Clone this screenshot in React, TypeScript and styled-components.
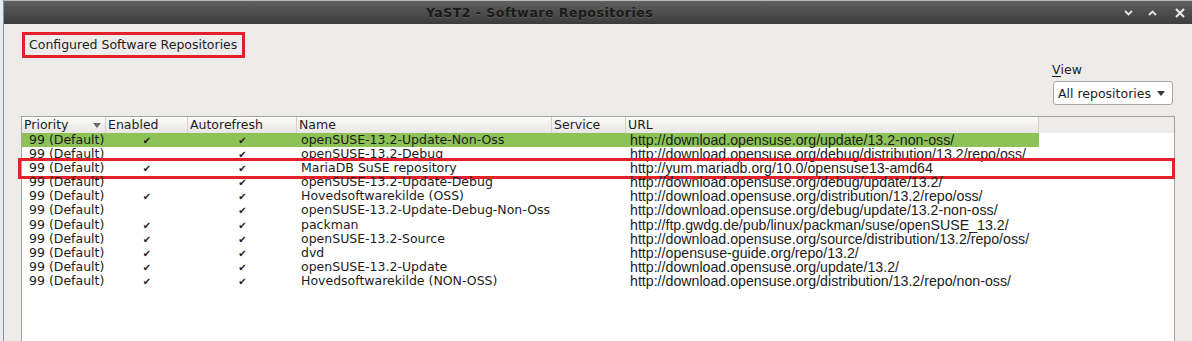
import React from 'react';
import styled, { createGlobalStyle } from 'styled-components';

const GlobalStyle = createGlobalStyle`
  html, body {
    margin: 0;
    padding: 0;
    height: 100%;
    overflow: hidden;
    background: #e6ecf2;
  }
  #root {
    height: 100%;
  }
`;

type Repo = {
  priority: string;
  enabled: boolean;
  autorefresh: boolean;
  name: string;
  service: string;
  url: string;
};

const REPOS: Repo[] = [
  { priority: '99 (Default)', enabled: true, autorefresh: true, name: 'openSUSE-13.2-Update-Non-Oss', service: '', url: 'http://download.opensuse.org/update/13.2-non-oss/' },
  { priority: '99 (Default)', enabled: false, autorefresh: true, name: 'openSUSE-13.2-Debug', service: '', url: 'http://download.opensuse.org/debug/distribution/13.2/repo/oss/' },
  { priority: '99 (Default)', enabled: true, autorefresh: true, name: 'MariaDB SuSE repository', service: '', url: 'http://yum.mariadb.org/10.0/opensuse13-amd64' },
  { priority: '99 (Default)', enabled: false, autorefresh: true, name: 'openSUSE-13.2-Update-Debug', service: '', url: 'http://download.opensuse.org/debug/update/13.2/' },
  { priority: '99 (Default)', enabled: true, autorefresh: true, name: 'Hovedsoftwarekilde (OSS)', service: '', url: 'http://download.opensuse.org/distribution/13.2/repo/oss/' },
  { priority: '99 (Default)', enabled: false, autorefresh: true, name: 'openSUSE-13.2-Update-Debug-Non-Oss', service: '', url: 'http://download.opensuse.org/debug/update/13.2-non-oss/' },
  { priority: '99 (Default)', enabled: true, autorefresh: true, name: 'packman', service: '', url: 'http://ftp.gwdg.de/pub/linux/packman/suse/openSUSE_13.2/' },
  { priority: '99 (Default)', enabled: true, autorefresh: true, name: 'openSUSE-13.2-Source', service: '', url: 'http://download.opensuse.org/source/distribution/13.2/repo/oss/' },
  { priority: '99 (Default)', enabled: true, autorefresh: true, name: 'dvd', service: '', url: 'http://opensuse-guide.org/repo/13.2/' },
  { priority: '99 (Default)', enabled: true, autorefresh: true, name: 'openSUSE-13.2-Update', service: '', url: 'http://download.opensuse.org/update/13.2/' },
  { priority: '99 (Default)', enabled: true, autorefresh: true, name: 'Hovedsoftwarekilde (NON-OSS)', service: '', url: 'http://download.opensuse.org/distribution/13.2/repo/non-oss/' },
];

// selected row (green) and the row marked with the red annotation
const SELECTED_ROW = 0;
const MARKED_ROW = 2;

const COLUMNS = '84px 82px 109px 255px 74px 413px 1fr';
const UI_FONT = '"DejaVu Sans", Verdana, sans-serif';
const URL_FONT = '"Liberation Sans", Arial, sans-serif';
const ANNOTATION_RED = '#e4212b';

const Window = styled.div`
  height: 100%;
  margin-left: 3px;
  border-left: 1px solid #8d8d8d;
  display: flex;
  flex-direction: column;
  background: #edeceb;
  font-family: ${UI_FONT};
  color: #1c1c1c;
`;

const TitleBar = styled.div`
  height: 24px;
  flex: none;
  box-sizing: border-box;
  border-top: 1px solid #b9b9b9;
  background: linear-gradient(to bottom, #606060 0%, #4a4a4a 60%, #3c3c3c 100%);
  display: flex;
  align-items: center;
`;

const Title = styled.div`
  flex: 1;
  text-align: center;
  padding-right: 48px;
  font-size: 12.5px;
  letter-spacing: 0.5px;
  font-weight: bold;
  color: #1a1a1a;
  text-shadow: 0 1px 0 rgba(255, 255, 255, 0.12);
`;

const TitleButtons = styled.div`
  display: flex;
  align-items: center;
  gap: 14px;
  padding-right: 7px;
`;

const TitleButton = styled.span<{ $gapAfter?: number }>`
  display: flex;
  width: 10px;
  height: 10px;
  align-items: center;
  justify-content: center;
  margin-right: ${p => p.$gapAfter ?? 0}px;
`;

const Body = styled.div`
  flex: 1;
  display: flex;
  flex-direction: column;
  padding: 8px 17px 0 17px;
  min-height: 0;
`;

const HeadingBox = styled.div`
  align-self: flex-start;
  margin-left: 1px;
  width: 223px;
  height: 26px;
  box-sizing: border-box;
  border: 3px solid ${ANNOTATION_RED};
  padding-left: 4px;
  font-size: 12.5px;
  line-height: 20px;
  white-space: nowrap;
`;

const ViewBlock = styled.div`
  align-self: flex-end;
  margin-top: 2px;
  margin-right: 2px;
  display: flex;
  flex-direction: column;
  width: 120px;
`;

const ViewLabel = styled.div`
  height: 20px;
  font-size: 12.5px;
  line-height: 20px;
  margin-left: -1px;

  u {
    text-decoration: none;
    border-bottom: 1px solid #1c1c1c;
    display: inline-block;
    line-height: 13px;
  }
`;

const Combo = styled.div`
  margin-top: 1px;
  height: 24px;
  box-sizing: border-box;
  border: 1px solid #a9a7a4;
  border-radius: 3px;
  background: #ffffff;
  display: flex;
  align-items: center;
  justify-content: space-between;
  padding: 0 7px 0 4px;
  font-size: 12.5px;
`;

const Table = styled.div`
  margin-top: 11px;
  flex: 1;
  border: 1px solid #a5a3a0;
  border-bottom: none;
  background: #ffffff;
  font-size: 12.5px;
`;

const HeaderRow = styled.div`
  display: grid;
  grid-template-columns: ${COLUMNS};
  height: 16px;
`;

const HeaderCell = styled.div<{ $filler?: boolean }>`
  display: flex;
  align-items: center;
  justify-content: space-between;
  padding: 0 4px 0 2px;
  line-height: 16px;
  overflow: hidden;
  white-space: nowrap;
  border-right: ${p => (p.$filler ? 'none' : '1px solid #d3d1ce')};
  background: ${p =>
    p.$filler ? '#edeceb' : 'linear-gradient(to bottom, #fcfcfb 0%, #f1f0ef 55%, #e7e6e4 100%)'};
`;

const SortArrow = styled.span`
  display: flex;
  align-items: center;
`;

const Row = styled.div<{ $marked?: boolean }>`
  display: grid;
  grid-template-columns: ${COLUMNS};
  height: 14.1px;
  position: relative;

  ${p =>
    p.$marked &&
    `
    &::after {
      content: '';
      position: absolute;
      top: -3px;
      bottom: -4px;
      left: -4px;
      right: -1px;
      border: 3px solid ${ANNOTATION_RED};
      pointer-events: none;
    }
  `}
`;

const Cell = styled.div<{ $selected?: boolean; $align?: 'left' | 'center'; $indent?: number; $url?: boolean }>`
  overflow: ${p => (p.$url ? 'visible' : 'hidden')};
  white-space: nowrap;
  line-height: 14px;
  padding-left: ${p => p.$indent ?? 4}px;
  text-align: ${p => p.$align ?? 'left'};
  background: ${p => (p.$selected ? '#8dc256' : 'transparent')};
  font-family: ${p => (p.$url ? URL_FONT : UI_FONT)};
  font-size: ${p => (p.$url ? '14.2px' : '12.5px')};
`;

const Check = styled.span`
  font-size: 10px;
  font-family: ${UI_FONT};
`;

const ChevronDown = () => (
  <svg width="9" height="6" viewBox="0 0 9 6">
    <path d="M1 1 L4.5 4.5 L8 1" fill="none" stroke="#e6e6e6" strokeWidth="1.8" />
  </svg>
);

const ChevronUp = () => (
  <svg width="9" height="6" viewBox="0 0 9 6">
    <path d="M1 5 L4.5 1.5 L8 5" fill="none" stroke="#e6e6e6" strokeWidth="1.8" />
  </svg>
);

const CloseIcon = () => (
  <svg width="10" height="10" viewBox="0 0 10 10">
    <path d="M1 1 L9 9 M9 1 L1 9" fill="none" stroke="#ececec" strokeWidth="2" />
  </svg>
);

const DropArrow = ({ color = '#3a3a3a' }: { color?: string }) => (
  <svg width="8" height="5" viewBox="0 0 8 5">
    <path d="M0 0 H8 L4 5 Z" fill={color} />
  </svg>
);

function App() {
  return (
    <>
      <GlobalStyle />
      <Window>
        <TitleBar>
          <Title>YaST2 - Software Repositories</Title>
          <TitleButtons>
            <TitleButton><ChevronDown /></TitleButton>
            <TitleButton $gapAfter={4}><ChevronUp /></TitleButton>
            <TitleButton><CloseIcon /></TitleButton>
          </TitleButtons>
        </TitleBar>

        <Body>
          <HeadingBox>Configured Software Repositories</HeadingBox>

          <ViewBlock>
            <ViewLabel><u>V</u>iew</ViewLabel>
            <Combo>
              <span>All repositories</span>
              <DropArrow />
            </Combo>
          </ViewBlock>

          <Table>
            <HeaderRow>
              <HeaderCell>
                <span>Priority</span>
                <SortArrow><DropArrow color="#6a6a6a" /></SortArrow>
              </HeaderCell>
              <HeaderCell>Enabled</HeaderCell>
              <HeaderCell>Autorefresh</HeaderCell>
              <HeaderCell>Name</HeaderCell>
              <HeaderCell>Service</HeaderCell>
              <HeaderCell>URL</HeaderCell>
              <HeaderCell $filler />
            </HeaderRow>

            {REPOS.map((repo, i) => {
              const sel = i === SELECTED_ROW;
              return (
                <Row key={repo.name} $marked={i === MARKED_ROW}>
                  <Cell $selected={sel} $indent={7}>{repo.priority}</Cell>
                  <Cell $selected={sel} $align="center" $indent={0}>
                    {repo.enabled && <Check>✔</Check>}
                  </Cell>
                  <Cell $selected={sel} $align="center" $indent={0}>
                    {repo.autorefresh && <Check>✔</Check>}
                  </Cell>
                  <Cell $selected={sel}>{repo.name}</Cell>
                  <Cell $selected={sel}>{repo.service}</Cell>
                  <Cell $selected={sel} $url>{repo.url}</Cell>
                  <Cell />
                </Row>
              );
            })}
          </Table>
        </Body>
      </Window>
    </>
  );
}

export default App;
